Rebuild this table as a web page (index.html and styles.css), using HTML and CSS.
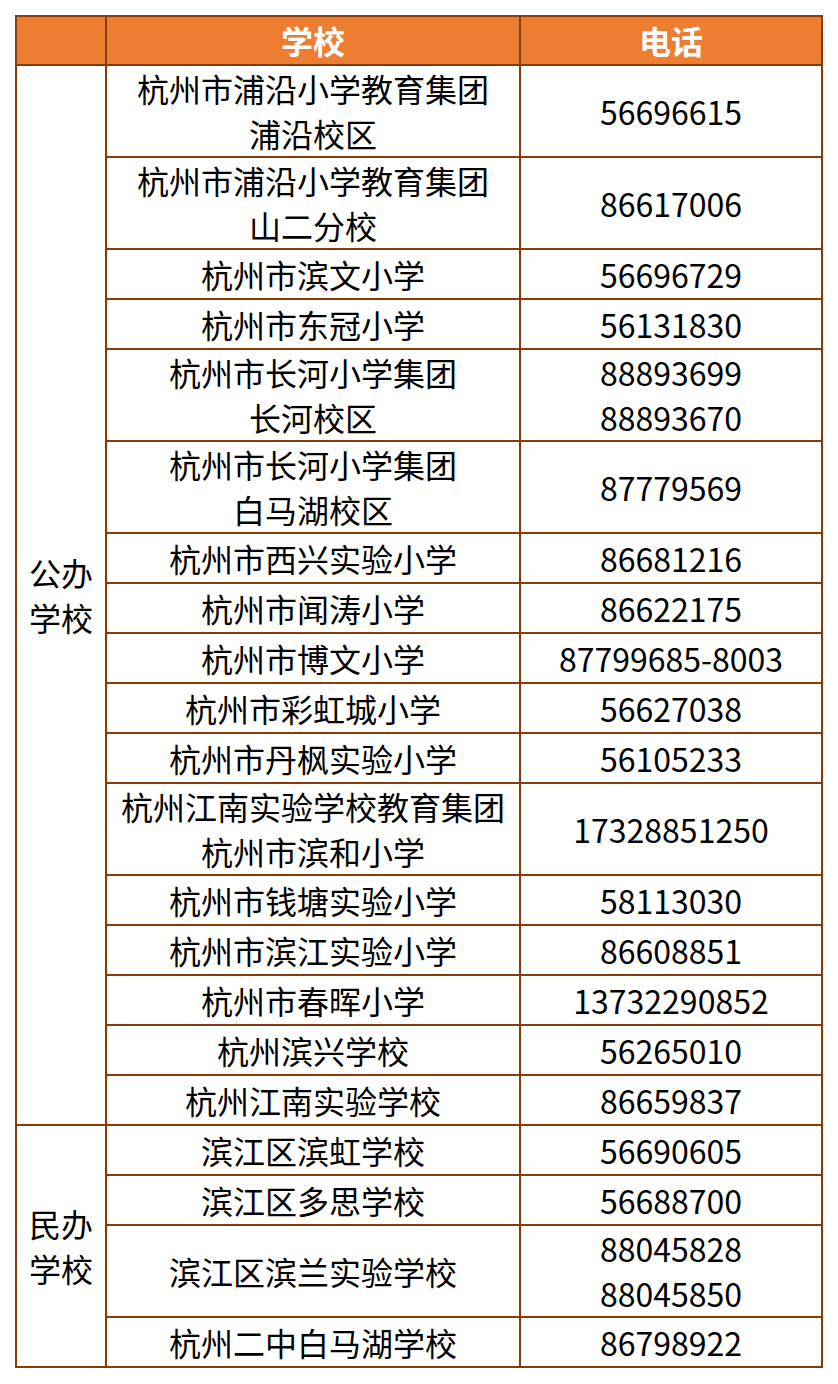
FILE: index.html
```html
<!DOCTYPE html>
<html lang="zh-CN">
<head>
<meta charset="utf-8">
<title>学校电话</title>
<link rel="stylesheet" href="styles.css">
</head>
<body>
<table class="tbl">
  <colgroup>
    <col class="c1"><col class="c2"><col class="c3">
  </colgroup>
  <thead>
    <tr class="hd"><th></th><th>学校</th><th>电话</th></tr>
  </thead>
  <tbody>
    <tr class="h2"><td class="type" rowspan="17">公办<br>学校</td><td>杭州市浦沿小学教育集团<br>浦沿校区</td><td>56696615</td></tr>
    <tr class="h2"><td>杭州市浦沿小学教育集团<br>山二分校</td><td>86617006</td></tr>
    <tr class="h1"><td>杭州市滨文小学</td><td>56696729</td></tr>
    <tr class="h1"><td>杭州市东冠小学</td><td>56131830</td></tr>
    <tr class="h2"><td>杭州市长河小学集团<br>长河校区</td><td>88893699<br>88893670</td></tr>
    <tr class="h2"><td>杭州市长河小学集团<br>白马湖校区</td><td>87779569</td></tr>
    <tr class="h1"><td>杭州市西兴实验小学</td><td>86681216</td></tr>
    <tr class="h1"><td>杭州市闻涛小学</td><td>86622175</td></tr>
    <tr class="h1"><td>杭州市博文小学</td><td>87799685-8003</td></tr>
    <tr class="h1"><td>杭州市彩虹城小学</td><td>56627038</td></tr>
    <tr class="h1"><td>杭州市丹枫实验小学</td><td>56105233</td></tr>
    <tr class="h2"><td>杭州江南实验学校教育集团<br>杭州市滨和小学</td><td>17328851250</td></tr>
    <tr class="h1"><td>杭州市钱塘实验小学</td><td>58113030</td></tr>
    <tr class="h1"><td>杭州市滨江实验小学</td><td>86608851</td></tr>
    <tr class="h1"><td>杭州市春晖小学</td><td>13732290852</td></tr>
    <tr class="h1"><td>杭州滨兴学校</td><td>56265010</td></tr>
    <tr class="h1"><td>杭州江南实验学校</td><td>86659837</td></tr>
    <tr class="h1"><td class="type" rowspan="4">民办<br>学校</td><td>滨江区滨虹学校</td><td>56690605</td></tr>
    <tr class="h1"><td>滨江区多思学校</td><td>56688700</td></tr>
    <tr class="h2"><td>滨江区滨兰实验学校</td><td>88045828<br>88045850</td></tr>
    <tr class="h1"><td>杭州二中白马湖学校</td><td>86798922</td></tr>
  </tbody>
</table>
</body>
</html>
```

FILE: styles.css
```css
html, body {
  margin: 0;
  padding: 0;
  background: #ffffff;
}
body {
  padding: 15px 0 0 15px;
  font-family: "Noto Sans CJK SC", "Noto Sans", sans-serif;
}
.tbl {
  border-collapse: separate;
  border-spacing: 0;
  border-top: 2px solid #843c0c;
  border-left: 2px solid #843c0c;
  table-layout: fixed;
  width: 808px;
}
.c1 { width: 90px; }
.c2 { width: 414px; }
.c3 { width: 302px; }
.tbl th,
.tbl td {
  border-right: 2px solid #843c0c;
  border-bottom: 2px solid #843c0c;
  padding: 0;
  text-align: center;
  vertical-align: middle;
  font-size: 32px;
  line-height: 45px;
  color: #000000;
  font-weight: 400;
  white-space: nowrap;
}
.tbl th {
  background: #ed7d31;
  color: #ffffff;
  font-weight: 700;
}
.hd { height: 49px; }
.h1 { height: 50px; }
.h2 { height: 92px; }
```
